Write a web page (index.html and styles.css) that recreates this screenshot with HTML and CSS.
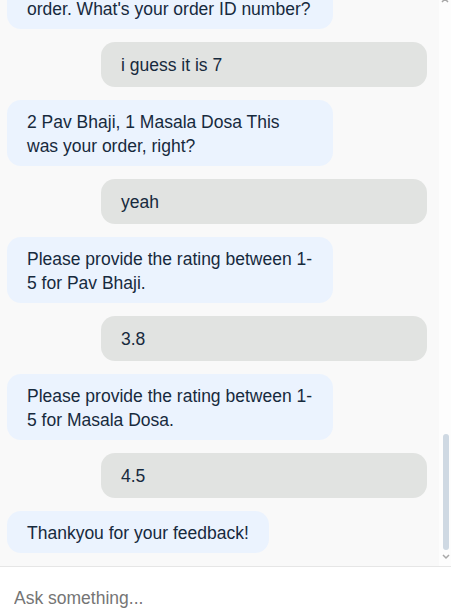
FILE: index.html
```html
<!DOCTYPE html>
<html>
<head>
<meta charset="utf-8">
<link rel="stylesheet" href="styles.css">
</head>
<body>
<div class="app">
  <div class="chat">
    <div class="messages">
      <div class="msg bot">Okay, let's check the status of your order. What's your order ID number?</div>
      <div class="msg user">i guess it is 7</div>
      <div class="msg bot">2 Pav Bhaji, 1 Masala Dosa This was your order, right?</div>
      <div class="msg user">yeah</div>
      <div class="msg bot">Please provide the rating between 1-5 for Pav Bhaji.</div>
      <div class="msg user">3.8</div>
      <div class="msg bot">Please provide the rating between 1-5 for Masala Dosa.</div>
      <div class="msg user">4.5</div>
      <div class="msg bot">Thankyou for your feedback!</div>
    </div>
    <div class="scrollbar">
      <svg class="arrow up" width="8" height="6" viewBox="0 0 8 6"><path d="M1 5 L4 2 L7 5" fill="none" stroke="#a8a8a8" stroke-width="1.5"/></svg>
      <div class="track">
        <div class="thumb"></div>
      </div>
      <svg class="arrow down" width="8" height="6" viewBox="0 0 8 6"><path d="M1 1 L4 4 L7 1" fill="none" stroke="#a8a8a8" stroke-width="1.5"/></svg>
    </div>
  </div>
  <div class="composer">
    <input class="input" type="text" placeholder="Ask something...">
  </div>
</div>
</body>
</html>
```
FILE: styles.css
```css
* { box-sizing: border-box; }
html, body { margin: 0; padding: 0; }
body {
  width: 451px;
  height: 615px;
  overflow: hidden;
  background: #ffffff;
  font-family: "Liberation Sans", Arial, sans-serif;
}
.app {
  display: flex;
  flex-direction: column;
  height: 615px;
}
.chat {
  display: flex;
  height: 567px;
  flex: none;
  border-bottom: 1px solid #e6e6e6;
}
.messages {
  width: 439px;
  background: #f9f9f9;
  display: flex;
  flex-direction: column;
  justify-content: flex-end;
  gap: 13px;
  padding: 0 12px 13px 7px;
  overflow: hidden;
}
.msg {
  font-size: 17.5px;
  line-height: 24px;
  color: #172a3d;
  border-radius: 14px;
  flex: none;
}
.bot {
  align-self: flex-start;
  max-width: 326px;
  background: #ebf3fe;
  padding: 10px 20px 8px;
}
.user {
  align-self: flex-end;
  width: 326px;
  background: #e1e3e1;
  padding: 11px 20px 10px;
}
.scrollbar {
  width: 12px;
  background: #fdfdfd;
  display: flex;
  flex-direction: column;
  align-items: center;
}
.arrow { display: block; flex: none; }
.arrow.up { margin-top: -3px; }
.track {
  flex: 1;
  display: flex;
  flex-direction: column;
  justify-content: flex-end;
  align-items: center;
  padding-bottom: 4px;
}
.thumb {
  width: 6px;
  height: 116px;
  border-radius: 3px;
  background: #cfd9e3;
  margin-left: 1px;
}
.arrow.down { margin-bottom: 6px; margin-left: 2px; }
.composer {
  flex: 1;
  padding: 20px 14px 0;
}
.input {
  border: none;
  outline: none;
  background: transparent;
  padding: 0;
  width: 100%;
  font-family: "Liberation Sans", Arial, sans-serif;
  font-size: 17.5px;
  line-height: 22px;
  color: #222;
}
.input::placeholder { color: #757575; }
```
